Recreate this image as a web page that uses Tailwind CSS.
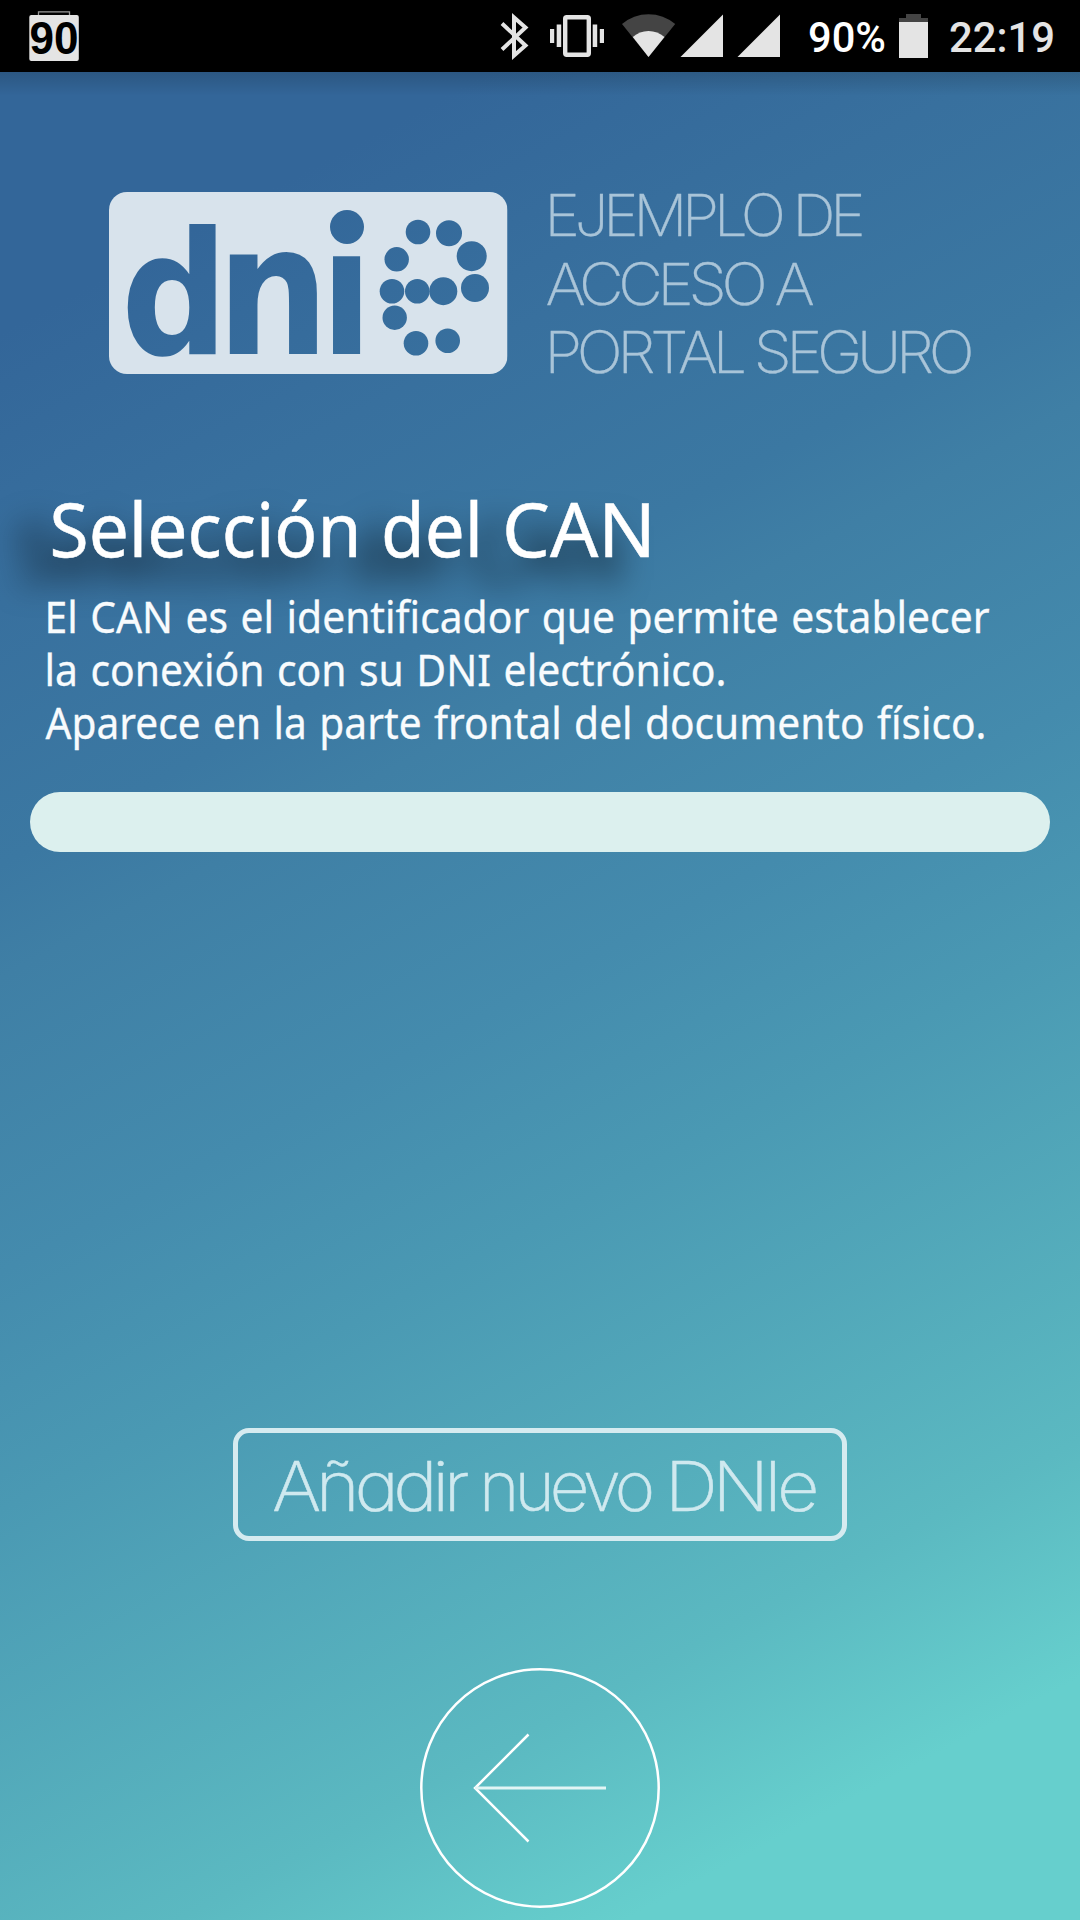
<!DOCTYPE html>
<html lang="es">
<head>
<meta charset="utf-8">
<title>Selección del CAN</title>
<script src="https://cdn.jsdelivr.net/npm/@tailwindcss/browser@4"></script>
</head>
<body class="w-[1080px] h-[1920px] overflow-hidden flex flex-col bg-black">
<header class="h-[72px] shrink-0 bg-black">
<svg class="block" width="1080" height="72" viewBox="0 0 1080 72" fill="#e4e4e4">
  <path d="M38.500 15V11.800H69.500V15" fill="none" stroke="#999" stroke-width="1.300"/>
  <rect x="29.300" y="15" width="49.500" height="46" rx="2"/>
  <text x="29.500" y="54" textLength="49" lengthAdjust="spacingAndGlyphs" fill="#000" class="font-['Liberation_Sans'] font-bold text-[47px]">90</text>
  <path d="M502 23.500L525.500 45.500L514 55.500V17.500L525.500 27.500L502 49.500" fill="none" stroke="#e4e4e4" stroke-width="4"/>
  <rect x="565.200" y="17.200" width="23.600" height="37.600" rx="1.500" fill="none" stroke="#e4e4e4" stroke-width="4.400"/>
  <path d="M550 29h4.200v14H550zM556.700 24.500h4.500v22.500h-4.500zM592.700 24.500h4.500v22.500h-4.500zM599.800 29h4.200v14h-4.200z"/>
  <path d="M648.500 57L622 24Q633.500 14.200 648.500 14.200T675.200 24Z" fill="#444"/>
  <path d="M648.500 57L632.800 37Q639.500 31 648.500 31T664.500 37Z"/>
  <path d="M680.500 57L723 14.500V57ZM737.500 57L780 14.500V57Z"/>
  <text x="808" y="51.800" textLength="78" lengthAdjust="spacingAndGlyphs" fill="#fff" class="font-[Roboto] font-medium text-[42px]">90%</text>
  <path d="M906 14h15v4h7v5h-29v-5h7z" fill="#444"/>
  <path d="M899 22h29v36h-29z"/>
  <text x="949" y="51.800" textLength="106" lengthAdjust="spacingAndGlyphs" class="font-[Roboto] font-medium text-[42px]">22:19</text>
</svg>
</header>
<main class="flex-1 flex flex-col items-center bg-[linear-gradient(152deg,#336699_230px,#38709e_469px,#3b78a2_700px,#3f7fa5_800px,#448bad_1060px,#4a99b3_1270px,#5bb9c1_1715px,#66cfcd_1925px)]">
  <div class="w-full h-6 shrink-0 bg-linear-to-b from-black/15 to-black/0"></div>
  <svg class="block shrink-0 mt-[94px] overflow-visible" width="1080" height="190" viewBox="0 190 1080 190">
    <defs>
      <mask id="logo">
        <rect x="109" y="192" width="398.500" height="182" rx="18" fill="#fff"/>
        <g fill="#000" class="font-['DejaVu_Sans'] font-bold">
          <text transform="translate(121 353.500) scale(.87 1)" class="text-[172px]">d</text>
          <text transform="translate(216.500 353.500) scale(.87 1)" class="text-[182px]">n</text>
          <text transform="translate(320 353.500) scale(.87 1)" class="text-[178px]">ı</text>
        </g>
        <g fill="#000">
          <circle cx="347" cy="227" r="17"/>
          <circle cx="418" cy="232" r="12.300"/><circle cx="449" cy="233.300" r="13"/>
          <circle cx="471.700" cy="256.200" r="15"/><circle cx="396.700" cy="259.300" r="12.200"/>
          <circle cx="392" cy="291.200" r="12.300"/><circle cx="417.300" cy="291.200" r="12.300"/>
          <circle cx="443.300" cy="291.200" r="14"/><circle cx="475" cy="288" r="14"/>
          <circle cx="394.700" cy="317.700" r="12.200"/><circle cx="416" cy="343.300" r="12.300"/>
          <circle cx="447.700" cy="340.700" r="12.300"/>
        </g>
      </mask>
    </defs>
    <rect x="109" y="192" width="398.500" height="182" fill="#d8e3ec" mask="url(#logo)"/>
    <g fill="#a9c4d8" stroke="#a9c4d8" stroke-width=".3" class="font-[Inter] font-extralight text-[58px] tracking-[-5px]">
      <text x="544.500" y="236.300" textLength="316" lengthAdjust="spacingAndGlyphs">EJEMPLO DE</text>
      <text x="545.500" y="304.500" textLength="264" lengthAdjust="spacingAndGlyphs">ACCESO A</text>
      <text x="544.500" y="372.700" textLength="425" lengthAdjust="spacingAndGlyphs">PORTAL SEGURO</text>
    </g>
  </svg>
  <svg class="block shrink-0 mt-[90px] overflow-visible" width="1080" height="302" viewBox="0 470 1080 302" fill="#fff">
    <text y="556.500" stroke="#fff" stroke-width=".5" class="font-['Noto_Sans'] text-[75px] drop-shadow-[-33px_23px_16px_rgb(0_0_0/.75)]"><tspan x="49.500" textLength="312" lengthAdjust="spacingAndGlyphs">Selección</tspan> <tspan x="381" textLength="102" lengthAdjust="spacingAndGlyphs">del</tspan> <tspan x="502" textLength="154" lengthAdjust="spacingAndGlyphs">CAN</tspan></text>
    <g fill="#f8fbfd" stroke="#f8fbfd" stroke-width=".3" class="font-['Noto_Sans'] text-[43.500px] [word-spacing:2px]">
      <text x="44.500" y="633.300" textLength="945" lengthAdjust="spacingAndGlyphs">El CAN es el identificador que permite establecer</text>
      <text x="44.500" y="686" textLength="682" lengthAdjust="spacingAndGlyphs">la conexión con su DNI electrónico.</text>
      <text x="45.500" y="738.700" textLength="941" lengthAdjust="spacingAndGlyphs">Aparece en la parte frontal del documento físico.</text>
    </g>
  </svg>
  <input class="block shrink-0 mt-5 w-[1020px] h-[60px] rounded-full bg-[#dcf0ee] px-6 outline-none" aria-label="CAN">
  <button class="shrink-0 mt-[576px] w-[614px] h-[113px] border-5 border-[#d6ebf0] rounded-[16px]">
    <svg class="block" width="604" height="103" viewBox="238 1433 604 103" fill="#cfe9ef">
      <g stroke="#cfe9ef" stroke-width=".5" class="font-[Inter] font-extralight text-[69px] tracking-[-5px] [font-feature-settings:'cv11']">
        <text x="272" y="1511" textLength="192" lengthAdjust="spacingAndGlyphs">Añadir</text>
        <text x="479" y="1511" textLength="171" lengthAdjust="spacingAndGlyphs">nuevo</text>
        <text x="665" y="1511" textLength="149" lengthAdjust="spacingAndGlyphs">DNIe</text>
      </g>
    </svg>
  </button>
  <button class="shrink-0 mt-[127px]" aria-label="Volver">
    <svg class="block" width="240" height="240" viewBox="0 0 240 240" fill="none" stroke="#fff" stroke-width="2.500">
      <circle cx="120" cy="120" r="118.700"/>
      <path d="M108.500 66.500L55 120L108.500 173.500"/>
      <path d="M55 120H186" stroke="#e2f5f5" stroke-width="3"/>
    </svg>
  </button>
</main>
</body>
</html>
